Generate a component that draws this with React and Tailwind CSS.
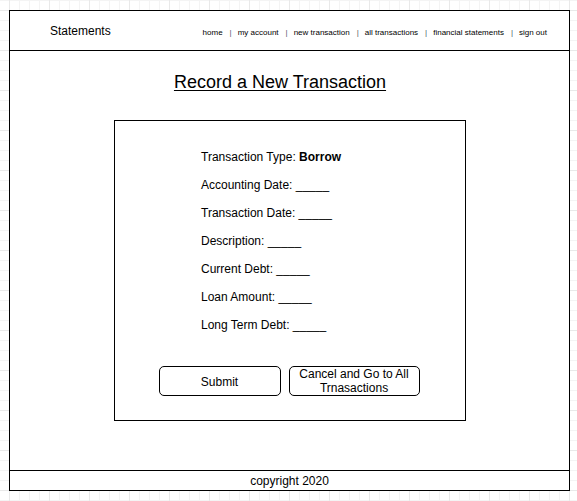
const navLinks = [
  "home",
  "my account",
  "new transaction",
  "all transactions",
  "financial statements",
  "sign out",
];

const fields = [
  "Accounting Date",
  "Transaction Date",
  "Description",
  "Current Debt",
  "Loan Amount",
  "Long Term Debt",
];

const NavBar = () => (
  <div className="flex items-center justify-between h-[40px] border-b border-black pl-[40px] pr-[22px]">
    <span className="text-[12px] leading-[14px] mt-[1px]">Statements</span>
    <nav className="flex items-center gap-[6px] text-[8px] leading-[10px] mt-[4px]">
      {navLinks.map((link, idx) => (
        <span key={link} className="flex items-center gap-[6px]">
          {idx > 0 && <span className="text-gray-600 ml-[1px]">|</span>}
          <a className="cursor-pointer">{link}</a>
        </span>
      ))}
    </nav>
  </div>
);

const TransactionCard = () => (
  <div className="ml-[104px] w-[352px] h-[301px] border border-black pt-[22px] flex flex-col">
    <div className="pl-[86px] text-[12px]">
      <div className="h-[28px] leading-[28px]">
        Transaction Type: <span className="font-bold">Borrow</span>
      </div>
      {fields.map((f) => (
        <div key={f} className="h-[28px] leading-[28px]">
          {f}: _____
        </div>
      ))}
    </div>

    <div className="flex justify-center gap-[8px] mt-[27px] pr-[2px]">
      <button className="w-[122px] h-[30px] border border-black rounded-[5px] text-[12px] leading-[14px] pt-[1px]">
        Submit
      </button>
      <button className="w-[131px] h-[30px] border border-black rounded-[5px] text-[12px] leading-[14px]">
        Cancel and Go to All
        <br />
        Trnasactions
      </button>
    </div>
  </div>
);

const App = () => {
  return (
    <div className="w-full h-[501px] pt-[10px] pl-[9px] font-[Liberation_Sans,Arial,sans-serif] text-black bg-white bg-[linear-gradient(to_right,#e9e9e9_1px,transparent_1px),linear-gradient(to_bottom,#e9e9e9_1px,transparent_1px),linear-gradient(to_right,#f4f4f4_1px,transparent_1px),linear-gradient(to_bottom,#f4f4f4_1px,transparent_1px)] bg-[length:40px_40px,40px_40px,10px_10px,10px_10px] bg-[position:9px_10px,9px_10px,9px_0px,9px_0px]">
      <div className="w-[561px] h-[481px] border border-black bg-white flex flex-col">
        <NavBar />

        <main className="flex-1 pt-[20px]">
          <h1 className="text-center pr-[19px] text-[18px] leading-[22px] underline underline-offset-[2px]">
            Record a New Transaction
          </h1>
          <div className="mt-[27px]">
            <TransactionCard />
          </div>
        </main>

        <footer className="h-[20px] border-t border-black text-center text-[12px] leading-[19px] pt-[1px]">
          copyright 2020
        </footer>
      </div>
    </div>
  );
};

export default App;
